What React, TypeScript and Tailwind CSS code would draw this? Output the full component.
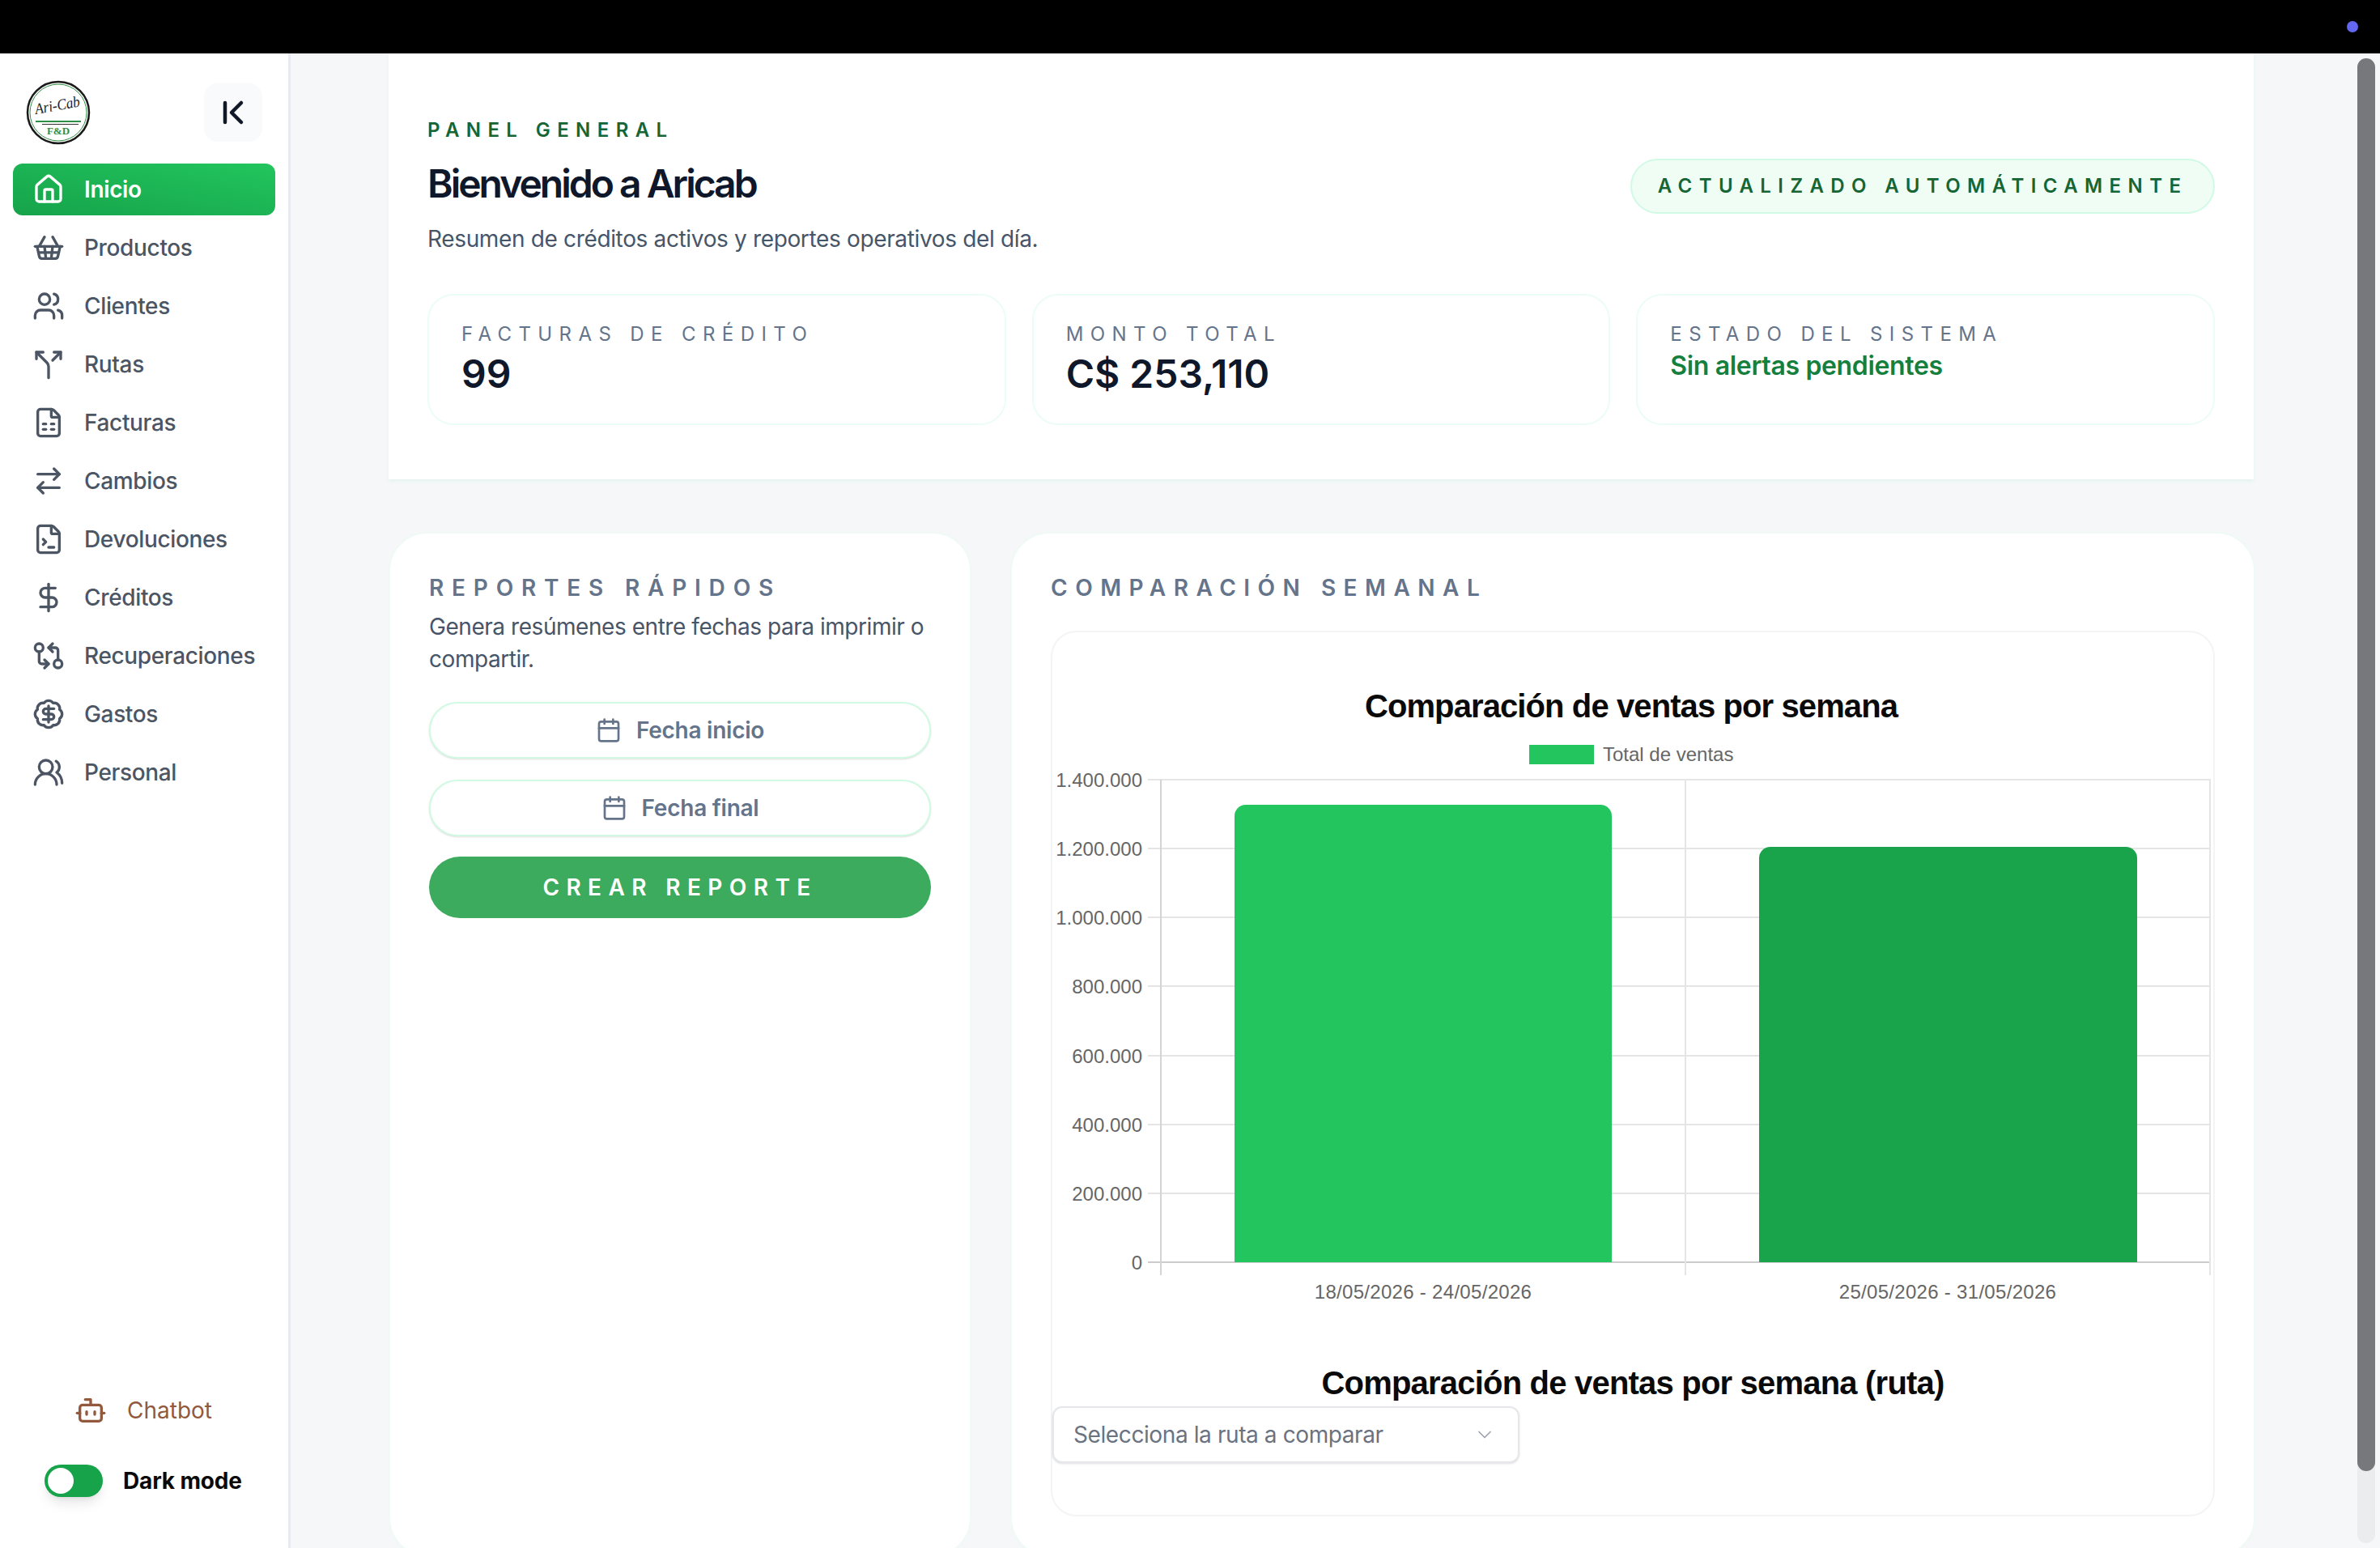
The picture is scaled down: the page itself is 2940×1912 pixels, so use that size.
import {
  ArrowRightLeft,
  BadgeDollarSign,
  Bot,
  Calendar,
  ChevronDown,
  ChevronFirst,
  DollarSign,
  FileSpreadsheet,
  FileTerminal,
  GitCompareArrows,
  House,
  ShoppingBasket,
  Split,
  Users,
  UsersRound,
} from "lucide-react";

const navItems = [
  { label: "Inicio", icon: House, active: true },
  { label: "Productos", icon: ShoppingBasket },
  { label: "Clientes", icon: Users },
  { label: "Rutas", icon: Split },
  { label: "Facturas", icon: FileSpreadsheet },
  { label: "Cambios", icon: ArrowRightLeft },
  { label: "Devoluciones", icon: FileTerminal },
  { label: "Créditos", icon: DollarSign },
  { label: "Recuperaciones", icon: GitCompareArrows },
  { label: "Gastos", icon: BadgeDollarSign },
  { label: "Personal", icon: UsersRound },
];

const ticks = [
  { y: 963, label: "1.400.000" },
  { y: 1048, label: "1.200.000" },
  { y: 1133, label: "1.000.000" },
  { y: 1218, label: "800.000" },
  { y: 1304, label: "600.000" },
  { y: 1389, label: "400.000" },
  { y: 1474, label: "200.000" },
  { y: 1559, label: "0" },
];

function Logo() {
  return (
    <svg width="80" height="80" viewBox="0 0 80 80" className="shrink-0">
      <circle cx="40" cy="40" r="38" fill="#fff" stroke="#1a1a1a" strokeWidth="2.5" />
      <circle cx="40" cy="40" r="35" fill="none" stroke="#2f8f46" strokeWidth="1" />
      <text x="39" y="37" textAnchor="middle" fontSize="19" fontStyle="italic" textLength="56" lengthAdjust="spacingAndGlyphs" fontFamily="'Liberation Serif', serif" fill="#222" transform="rotate(-10 40 32)">
        Ari-Cab
      </text>
      <rect x="12" y="50" width="56" height="2" fill="#2f8f46" />
      <rect x="20" y="54" width="45" height="1" fill="#333" />
      <text x="40" y="67" textAnchor="middle" fontSize="13" fontWeight="700" fontFamily="'Liberation Serif', serif" fill="#2f8f46">
        F&amp;D
      </text>
    </svg>
  );
}

function Sidebar() {
  return (
    <aside className="w-[359px] shrink-0 bg-white border-r-[3px] border-[#e7eaee] flex flex-col">
      <div className="pl-8 pr-8 pt-[33px] flex items-center justify-between">
        <Logo />
        <button className="w-[72px] h-[72px] rounded-2xl bg-[#f9fafb] flex items-center justify-center text-[#111827]">
          <ChevronFirst size={48} strokeWidth={2.25} />
        </button>
      </div>
      <nav className="mt-[23px] px-4 flex flex-col gap-2">
        {navItems.map((item) => (
          <a
            key={item.label}
            className={
              item.active
                ? "h-16 rounded-xl px-6 flex items-center gap-6 text-[28px] font-semibold tracking-[-0.35px] text-white bg-linear-to-tr from-[#16a34a] to-[#22c55e]"
                : "h-16 rounded-xl px-6 flex items-center gap-6 text-[28px] font-medium tracking-[-0.35px] text-[#4b5563]"
            }
          >
            <item.icon size={40} strokeWidth={2} className="shrink-0" />
            {item.label}
          </a>
        ))}
      </nav>
      <div className="mt-auto pb-[62px] flex flex-col">
        <a className="pl-[92px] flex items-center gap-[25px] text-[28px] text-[#92593d]">
          <Bot size={40} strokeWidth={2} />
          Chatbot
        </a>
        <div className="mt-[45px] pl-[55px] flex items-center gap-[25px]">
          <span className="w-[72px] h-10 rounded-full bg-[#16a34a] p-1 shadow-lg flex">
            <span className="w-8 h-8 rounded-full bg-white" />
          </span>
          <span className="text-[28px] font-bold tracking-[-0.15px] text-[#0a0a0a]">Dark mode</span>
        </div>
      </div>
    </aside>
  );
}

function StatCard({ label, children }: { label: string; children: React.ReactNode }) {
  return (
    <div className="h-[162px] rounded-[32px] border-2 border-[#ecfdf5] bg-white px-10 pt-[32px]">
      <p className="text-[24px] leading-8 tracking-[0.35em] text-[#64748b]">{label}</p>
      {children}
    </div>
  );
}

function Header() {
  return (
    <section className="h-[526px] bg-white px-12 pt-[79px] shadow-[0_2px_4px_rgba(16,185,129,0.08)]">
      <div className="flex items-center justify-between">
        <div>
          <p className="text-[24px] leading-8 font-semibold tracking-[0.35em] text-[#166534]">PANEL GENERAL</p>
          <h1 className="mt-[22px] text-[48px] leading-[56px] font-semibold tracking-[-3px] text-[#0f172a]">
            Bienvenido a Aricab
          </h1>
          <p className="mt-5 text-[28px] leading-10 tracking-[-0.35px] text-[#475569]">
            Resumen de créditos activos y reportes operativos del día.
          </p>
        </div>
        <span className="h-[68px] w-[722px] rounded-full border-2 border-[#d1fae5] bg-[#f0fdf4] flex items-center justify-center text-[24px] font-semibold tracking-[0.35em] text-[#166534]">
          ACTUALIZADO AUTOMÁTICAMENTE
        </span>
      </div>
      <div className="mt-12 grid grid-cols-3 gap-8">
        <StatCard label="FACTURAS DE CRÉDITO">
          <p className="mt-[5px] text-[48px] leading-[56px] font-semibold text-[#0f172a]">99</p>
        </StatCard>
        <StatCard label="MONTO TOTAL">
          <p className="mt-[5px] text-[48px] leading-[56px] font-semibold text-[#0f172a]">C$ 253,110</p>
        </StatCard>
        <StatCard label="ESTADO DEL SISTEMA">
          <p className="mt-[1px] text-[32px] leading-[44px] font-semibold tracking-[-0.35px] text-[#15803d]">Sin alertas pendientes</p>
        </StatCard>
      </div>
    </section>
  );
}

function Reports() {
  return (
    <div className="rounded-[48px] border-2 border-[#effaf5] bg-white px-12 pt-[47px]">
      <h2 className="text-[28px] leading-10 font-semibold tracking-[0.35em] text-[#64748b]">REPORTES RÁPIDOS</h2>
      <p className="mt-2 text-[28px] leading-10 tracking-[-0.45px] text-[#475569]">
        Genera resúmenes entre fechas para imprimir o compartir.
      </p>
      <div className="mt-[33px] flex flex-col gap-[26px]">
        {["Fecha inicio", "Fecha final"].map((label) => (
          <button
            key={label}
            className="h-[70px] rounded-full border-2 border-[#d1fae5] bg-white shadow-sm flex items-center justify-center gap-[18px] text-[28px] font-semibold tracking-[-0.25px] text-[#64748b]"
          >
            <Calendar size={32} strokeWidth={2} />
            {label}
          </button>
        ))}
      </div>
      <button className="mt-[25px] w-full h-[76px] rounded-full bg-[#3dab5e] text-[28px] font-semibold tracking-[0.3em] text-white">
        CREAR REPORTE
      </button>
    </div>
  );
}

function WeeklyChart() {
  return (
    <svg width="1434" height="860" viewBox="1300 781 1434 860" className="block font-['Liberation_Sans',Arial,sans-serif]">
      <text x="2015" y="886" textAnchor="middle" fontSize="40" fontWeight="700" letterSpacing="-0.9" fill="#0a0a0a">
        Comparación de ventas por semana
      </text>
      <rect x="1889" y="920" width="80" height="24" fill="#22c55e" />
      <text x="1980" y="940" fontSize="24" fill="#666">Total de ventas</text>

      {ticks.map((t) => (
        <g key={t.label}>
          <line x1="1418" x2="2731" y1={t.y} y2={t.y} stroke={t.label === "0" ? "#ccc" : "#e5e5e5"} strokeWidth="2" />
          <text x="1411" y={t.y + 9} textAnchor="end" fontSize="24" fill="#666">{t.label}</text>
        </g>
      ))}
      <line x1="1434" x2="1434" y1="963" y2="1575" stroke="#d4d4d4" strokeWidth="2" />
      <line x1="2082" x2="2082" y1="963" y2="1575" stroke="#e5e5e5" strokeWidth="2" />
      <line x1="2730" x2="2730" y1="963" y2="1575" stroke="#e5e5e5" strokeWidth="2" />

      <path d="M1525 1559V1008a14 14 0 0 1 14-14h438a14 14 0 0 1 14 14v551z" fill="#22c55e" />
      <path d="M2173 1559V1060a14 14 0 0 1 14-14h439a14 14 0 0 1 14 14v499z" fill="#19a34b" />

      <text x="1758" y="1604" textAnchor="middle" fontSize="24" letterSpacing="0.3" fill="#666">18/05/2026 - 24/05/2026</text>
      <text x="2406" y="1604" textAnchor="middle" fontSize="24" letterSpacing="0.3" fill="#666">25/05/2026 - 31/05/2026</text>
    </svg>
  );
}

function Comparison() {
  return (
    <div className="rounded-[48px] border-2 border-[#effaf5] bg-white px-12 pt-[47px] pb-12">
      <h2 className="text-[28px] leading-10 font-semibold tracking-[9.5px] text-[#64748b]">COMPARACIÓN SEMANAL</h2>
      <div className="mt-[33px] rounded-[32px] border-2 border-[#f3f4f6] pb-[64px]">
        <WeeklyChart />
        <h3 className="mt-[43px] text-center text-[40px] leading-[48px] font-bold tracking-[-0.8px] text-[#0a0a0a] font-['Liberation_Sans',Arial,sans-serif]">
          Comparación de ventas por semana (ruta)
        </h3>
        <button className="mt-[5px] w-[577px] h-[70px] rounded-xl border-2 border-[#e5e7eb] bg-white shadow-sm pl-6 pr-[27px] flex items-center justify-between text-[28px] tracking-[-0.4px] text-[#6b7280]">
          Selecciona la ruta a comparar
          <ChevronDown size={28} strokeWidth={1.5} className="text-[#9ca3af]" />
        </button>
      </div>
    </div>
  );
}

export default function App() {
  return (
    <div className="relative w-[2940px] h-[1912px] overflow-hidden flex flex-col bg-[#f5f7f9] font-['Inter',sans-serif]">
      <div className="h-[66px] shrink-0 bg-black" />
      <div className="flex-1 min-h-0 flex">
        <Sidebar />
        <main className="flex-1 min-w-0 pl-[121px] pr-[156px]">
          <Header />
          <div className="mt-[65px] grid grid-cols-[720px_1fr] gap-12">
            <Reports />
            <Comparison />
          </div>
        </main>
      </div>
      {/* overlays: window dot and scrollbar */}
      <span className="absolute left-[2899px] top-[26px] w-[14px] h-[14px] rounded-full bg-[#6366f1]" />
      <div className="absolute left-[2912px] top-[72px] w-[22px] h-[1834px] rounded-full bg-[#ebecee]">
        <div className="h-[1745px] rounded-full bg-[#77787b]" />
      </div>
    </div>
  );
}
